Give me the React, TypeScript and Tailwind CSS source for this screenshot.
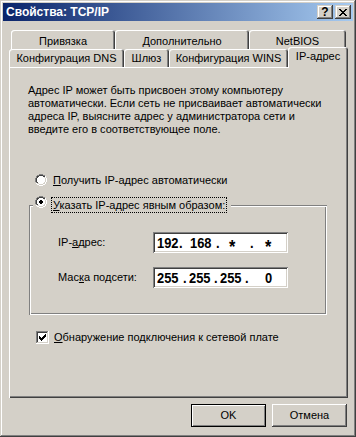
import React from 'react';

// Windows 2000 "TCP/IP properties" dialog

type Palette = Record<string, string>;

const PAL: Palette = {
  G: '#808080',
  D: '#404040',
  W: '#ffffff',
  L: '#d4d0c8',
  H: '#ffffff',
  K: '#000000',
};

const PixelArt: React.FC<{ rows: string[]; palette?: Palette }> = ({ rows, palette = PAL }) => {
  const w = rows[0].length;
  const h = rows.length;
  return (
    <svg width={w} height={h} viewBox={`0 0 ${w} ${h}`} shapeRendering="crispEdges" className="block shrink-0">
      {rows.flatMap((row, y) =>
        row.split('').map((c, x) =>
          palette[c] ? <rect key={`${x}-${y}`} x={x} y={y} width={1} height={1} fill={palette[c]} /> : null
        )
      )}
    </svg>
  );
};

const RADIO_OFF = [
  '....GGGG....',
  '..GGDDDDGG..',
  '.GDDWWWWDDH.',
  '.GDWWWWWWLH.',
  'GDWWWWWWWWLH',
  'GDWWWWWWWWLH',
  'GDWWWWWWWWLH',
  'GDWWWWWWWWLH',
  '.GDWWWWWWLH.',
  '.HLLWWWWLLH.',
  '..HHLLLLHH..',
  '....HHHH....',
];

const RADIO_ON = [
  '....GGGG....',
  '..GGDDDDGG..',
  '.GDDWWWWDDH.',
  '.GDWWWWWWLH.',
  'GDWWWKKWWWLH',
  'GDWWKKKKWWLH',
  'GDWWKKKKWWLH',
  'GDWWWKKWWWLH',
  '.GDWWWWWWLH.',
  '.HLLWWWWLLH.',
  '..HHLLLLHH..',
  '....HHHH....',
];

const CHECKBOX_ON = [
  'GGGGGGGGGGGGH',
  'GDDDDDDDDDDLH',
  'GDWWWWWWWWWLH',
  'GDWWWWWWWKWLH',
  'GDWWWWWWKKWLH',
  'GDWKWWWKKKWLH',
  'GDWKKWKKKWWLH',
  'GDWKKKKKWWWLH',
  'GDWWKKKWWWWLH',
  'GDWWWKWWWWWLH',
  'GDWWWWWWWWWLH',
  'GLLLLLLLLLLLH',
  'HHHHHHHHHHHHH',
];

const CLOSE_GLYPH = [
  'KK....KK',
  '.KK..KK.',
  '..KKKK..',
  '...KK...',
  '..KKKK..',
  '.KK..KK.',
  'KK....KK',
];

const TitleButton: React.FC<{ children: React.ReactNode; className?: string }> = ({ children, className = '' }) => (
  <div
    className={`w-[16px] h-[14px] bg-[#d4d0c8] flex items-center justify-center shadow-[inset_-1px_-1px_#404040,inset_1px_1px_#d4d0c8,inset_-2px_-2px_#808080,inset_2px_2px_#fff] ${className}`}
  >
    {children}
  </div>
);

const BackTab: React.FC<{ label: string; width: string }> = ({ label, width }) => (
  <div
    className={`${width} h-full flex justify-center pt-[5px] leading-[13px] rounded-t-[3px] shadow-[inset_1px_1px_#fff,inset_-1px_0_#404040,inset_-2px_0_#808080]`}
  >
    {label}
  </div>
);

const FrontTab: React.FC<{ label: string; width: string }> = ({ label, width }) => (
  <div
    className={`${width} h-[18px] flex justify-center pt-[3px] leading-[13px] rounded-t-[3px] bg-[#d4d0c8] shadow-[inset_1px_1px_#fff,inset_-1px_0_#404040,inset_-2px_0_#808080]`}
  >
    {label}
  </div>
);

type Cell = { text: string; w?: string };

const IpBox: React.FC<{ cells: Cell[] }> = ({ cells }) => (
  <div className="w-[135px] h-[21px] bg-white flex items-center pl-[4px] shadow-[inset_1px_1px_#808080,inset_-1px_-1px_#fff,inset_2px_2px_#404040,inset_-2px_-2px_#d4d0c8] font-['Liberation_Sans',sans-serif] font-bold text-[15px] leading-[15px]">
    {cells.map((c, i) => (
      <span key={i} className={`${c.w ?? ''} shrink-0 whitespace-pre`}>
        <span
          className={`inline-block origin-left scale-x-[0.86] ${c.text === '*' ? 'text-[19px] translate-y-[4px]' : ''}`}
        >
          {c.text}
        </span>
      </span>
    ))}
  </div>
);

const IP_CELLS: Cell[] = [
  { text: '192', w: 'w-[22px]' },
  { text: '.', w: 'w-[11px]' },
  { text: '168', w: 'w-[26px]' },
  { text: '.', w: 'w-[13px]' },
  { text: '*', w: 'w-[21px]' },
  { text: '.', w: 'w-[15px]' },
  { text: '*' },
];

const MASK_CELLS: Cell[] = [
  { text: '255', w: 'w-[26px]' },
  { text: '.', w: 'w-[6px]' },
  { text: '255', w: 'w-[25px]' },
  { text: '.', w: 'w-[6px]' },
  { text: '255', w: 'w-[25px]' },
  { text: '.', w: 'w-[20px]' },
  { text: '0' },
];

export default function App() {
  return (
    <div className="w-[356px] h-[437px] bg-[#d4d0c8] p-[3px] flex flex-col text-black text-[11px] font-['Liberation_Sans',Arial,sans-serif] shadow-[inset_-1px_-1px_#404040,inset_1px_1px_#d4d0c8,inset_-2px_-2px_#808080,inset_2px_2px_#fff]">
      {/* Title bar */}
      <div className="h-[18px] flex items-center pl-[3px] pr-[2px] bg-linear-to-r/srgb from-[#0a246a] to-[#a6caf0]">
        <span className="flex-1 text-white font-bold text-[12px] leading-none">Свойства: TCP/IP</span>
        <TitleButton>
          <span className="font-bold text-[12px] leading-none">?</span>
        </TitleButton>
        <TitleButton className="ml-[2px]">
          <PixelArt rows={CLOSE_GLYPH} />
        </TitleButton>
      </div>

      <div className="flex flex-col pl-[6px] pr-[5px] pt-[9px]">
        {/* Tabs */}
        <div className="flex h-[19px] pl-[2px]">
          <BackTab label="Привязка" width="w-[104px]" />
          <BackTab label="Дополнительно" width="w-[134px]" />
          <BackTab label="NetBIOS" width="w-[97px]" />
        </div>
        <div className="flex h-[18px] items-end">
          <FrontTab label="Конфигурация DNS" width="w-[115px]" />
          <FrontTab label="Шлюз" width="w-[45px]" />
          <FrontTab label="Конфигурация WINS" width="w-[119px]" />
          <div className="relative z-10 -mb-px w-[60px] h-[21px] flex justify-center pt-[3px] leading-[13px] rounded-t-[3px] bg-[#d4d0c8] shadow-[inset_1px_1px_#fff,inset_-1px_0_#404040,inset_-2px_0_#808080]">
            IP-адрес
          </div>
        </div>

        {/* Panel */}
        <div className="h-[331px] flex flex-col shadow-[inset_1px_1px_#fff,inset_-1px_-1px_#404040,inset_-2px_-2px_#808080]">
          <p className="mt-[17px] ml-[19px] leading-[13px] whitespace-nowrap">
            Адрес IP может быть присвоен этому компьютеру
            <br />
            автоматически. Если сеть не присваивает автоматически
            <br />
            адреса IP, выясните адрес у администратора сети и
            <br />
            введите его в соответствующее поле.
          </p>

          <div className="mt-[38px] ml-[26px] h-[12px] flex items-center gap-[6px]">
            <PixelArt rows={RADIO_OFF} />
            <span className="leading-[13px] whitespace-nowrap">
              <u>П</u>олучить IP-адрес автоматически
            </span>
          </div>

          {/* Group box */}
          <div className="relative mt-[19px] ml-[20px] w-[298px] h-[110px] shrink-0 shadow-[inset_1px_1px_#808080,inset_-1px_-1px_#fff,inset_2px_2px_#fff,inset_-2px_-2px_#808080]">
            <div className="absolute left-[4px] -top-[9px] flex items-start bg-[#d4d0c8] pl-[2px] pr-[4px]">
              <PixelArt rows={RADIO_ON} />
              <span className="ml-[4px] mt-[1px] h-[16px] pl-[1px] pr-px leading-[14px] border border-dotted border-black whitespace-nowrap">
                <u>У</u>казать IP-адрес явным образом:
              </span>
            </div>

            <div className="flex flex-col pl-[29px] pt-[27px] gap-[14px]">
              <div className="flex items-center h-[21px]">
                <span className="w-[95px] shrink-0">
                  IP-<u>а</u>дрес:
                </span>
                <IpBox cells={IP_CELLS} />
              </div>
              <div className="flex items-center h-[21px]">
                <span className="w-[95px] shrink-0">
                  Мас<u>к</u>а подсети:
                </span>
                <IpBox cells={MASK_CELLS} />
              </div>
            </div>
          </div>

          <div className="mt-[16px] ml-[27px] h-[13px] flex items-center gap-[5px]">
            <PixelArt rows={CHECKBOX_ON} />
            <span className="leading-[13px] whitespace-nowrap">
              <u>О</u>бнаружение подключения к сетевой плате
            </span>
          </div>
        </div>

        {/* Buttons */}
        <div className="flex justify-end gap-[6px] mt-[6px] pr-[1px]">
          <button className="w-[75px] h-[23px] bg-[#d4d0c8] border border-black flex items-center justify-center leading-none shadow-[inset_1px_1px_#fff,inset_-1px_-1px_#808080]">
            OK
          </button>
          <button className="w-[75px] h-[23px] bg-[#d4d0c8] flex items-center justify-center leading-none shadow-[inset_-1px_-1px_#404040,inset_1px_1px_#fff,inset_-2px_-2px_#808080]">
            Отмена
          </button>
        </div>
      </div>
    </div>
  );
}
